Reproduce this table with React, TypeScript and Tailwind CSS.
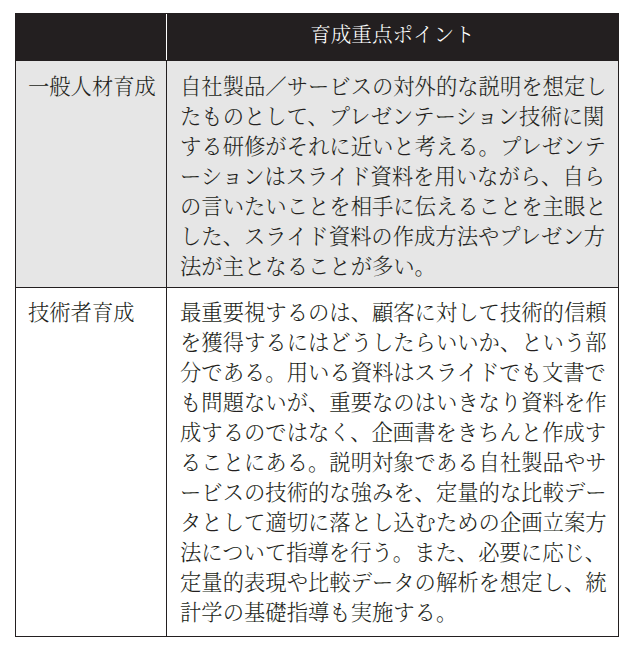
import React from 'react';

const rows = [
  {
    label: '一般人材育成',
    shaded: true,
    pad: 'pt-[9px] pb-[7px]',
    lines: [
      '自社製品／サービスの対外的な説明を想定し',
      'たものとして、プレゼンテーション技術に関',
      'する研修がそれに近いと考える。プレゼンテ',
      'ーションはスライド資料を用いながら、自ら',
      'の言いたいことを相手に伝えることを主眼と',
      'した、スライド資料の作成方法やプレゼン方',
      '法が主となることが多い。',
    ],
  },
  {
    label: '技術者育成',
    shaded: false,
    pad: 'pt-[8px] pb-[10px]',
    lines: [
      '最重要視するのは、顧客に対して技術的信頼',
      'を獲得するにはどうしたらいいか、という部',
      '分である。用いる資料はスライドでも文書で',
      'も問題ないが、重要なのはいきなり資料を作',
      '成するのではなく、企画書をきちんと作成す',
      'ることにある。説明対象である自社製品やサ',
      'ービスの技術的な強みを、定量的な比較デー',
      'タとして適切に落とし込むための企画立案方',
      '法について指導を行う。また、必要に応じ、',
      '定量的表現や比較データの解析を想定し、統',
      '計学の基礎指導も実施する。',
    ],
  },
];

export default function App() {
  return (
    <main className="w-[636px] h-[651px] bg-white pt-[13px] pl-[15px] font-['Noto_Serif_CJK_JP','Noto_Sans_CJK_JP',serif] font-light text-[#231f20]">
      <div className="w-[604px] border border-[#231f20]">
        {/* header */}
        <div className="flex h-[46px] bg-[#231f20] text-white">
          <div className="w-[151px] border-r border-white" />
          <div className="flex-1 flex items-center justify-center pb-[7px] text-[20.6px]">
            育成重点ポイント
          </div>
        </div>

        {rows.map((r) => (
          <div
            key={r.label}
            className={`flex border-t border-[#231f20] ${r.shaded ? 'bg-[#e6e6e6]' : 'bg-white'}`}
          >
            <div className={`w-[151px] shrink-0 border-r border-[#231f20] pl-[12px] ${r.pad} text-[21.3px] leading-[30px] whitespace-nowrap`}>
              {r.label}
            </div>
            <div className={`flex-1 pl-[13px] ${r.pad} text-[21.33px] leading-[30px]`}>
              {r.lines.map((l, i) => (
                <div key={i} className="whitespace-nowrap">{l}</div>
              ))}
            </div>
          </div>
        ))}
      </div>
    </main>
  );
}
